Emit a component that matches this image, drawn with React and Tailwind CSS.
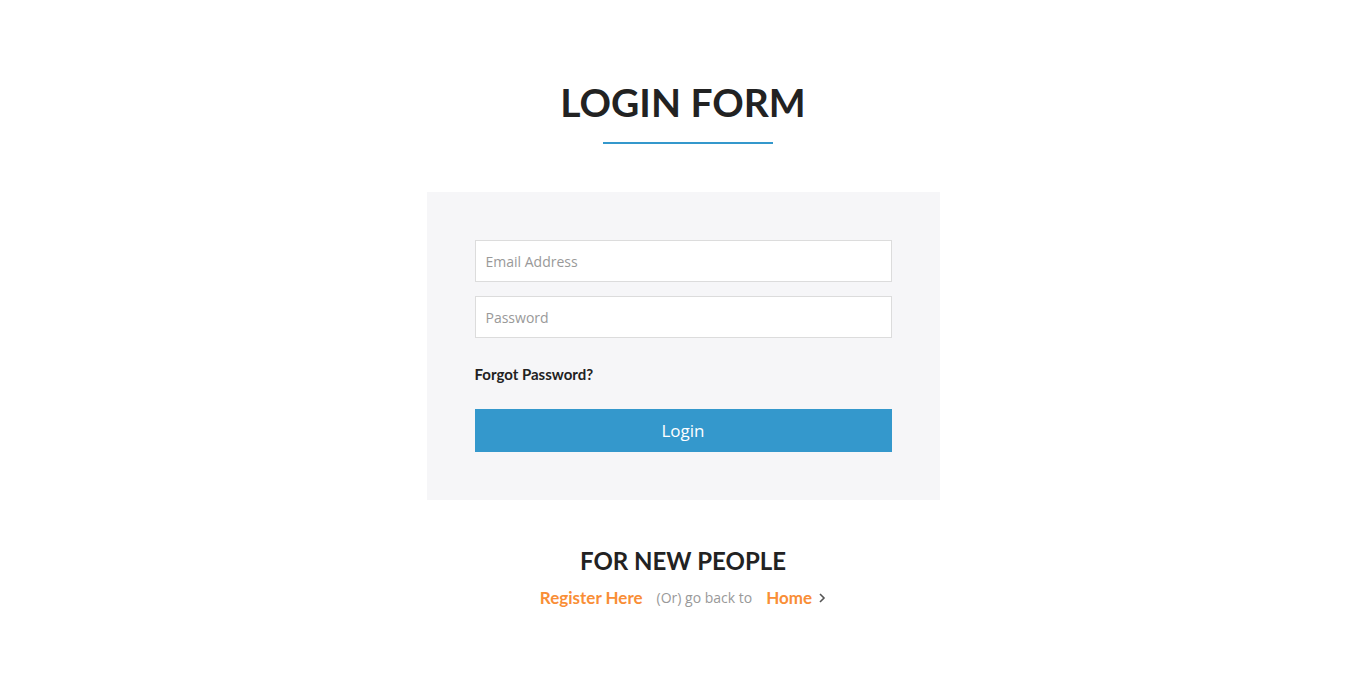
import React from 'react';

export default function App() {
    return (
        <div className="min-h-[691px] w-full bg-white flex flex-col items-center pt-[78px]">
            {/* title */}
            <h1 className="text-[39px] leading-[48px] font-bold text-[#222] font-['Lato','Liberation_Sans',sans-serif]">
                LOGIN FORM
            </h1>
            <div className="mt-[16px] ml-[10px] w-[170px] h-[2px] bg-[#3498cc]" />

            {/* form card */}
            <div className="mt-[48px] w-[513px] bg-[#f6f6f8] px-[48px] pt-[48px] pb-[48px]">
                <input
                    type="email"
                    placeholder="Email Address"
                    className="block w-full h-[42px] bg-white border border-[#dcdcdc] px-[10px] text-[14px] text-[#555] placeholder:text-[#999] outline-none font-['Open_Sans',sans-serif]"
                />
                <input
                    type="password"
                    placeholder="Password"
                    className="block w-full h-[42px] mt-[14px] bg-white border border-[#dcdcdc] px-[10px] text-[14px] text-[#555] placeholder:text-[#999] outline-none font-['Open_Sans',sans-serif]"
                />
                <div className="mt-[26px] h-[20px] flex items-center">
                    <a href="#" className="text-[15px] font-bold text-[#222] font-['Lato','Liberation_Sans',sans-serif]">
                        Forgot Password?
                    </a>
                </div>
                <button className="mt-[25px] w-full h-[43px] bg-[#3498cc] text-white text-[17px] font-['Open_Sans',sans-serif]">
                    Login
                </button>
            </div>

            {/* footer */}
            <h2 className="mt-[46px] text-[24px] leading-[30px] font-bold text-[#222] font-['Lato','Liberation_Sans',sans-serif]">
                FOR NEW PEOPLE
            </h2>
            <div className="mt-[9px] flex items-center gap-[14px]">
                <a href="#" className="text-[17px] font-bold text-[#f98e36] font-['Lato','Liberation_Sans',sans-serif]">
                    Register Here
                </a>
                <span className="text-[14px] text-[#999] font-['Open_Sans',sans-serif]">(Or) go back to</span>
                <a href="#" className="flex items-center gap-[6px] text-[17px] font-bold text-[#f98e36] font-['Lato','Liberation_Sans',sans-serif]">
                    Home
                    <svg width="8" height="12" viewBox="0 0 8 12" fill="none" stroke="#555" strokeWidth="1.6">
                        <path d="M2 2l4 4-4 4" />
                    </svg>
                </a>
            </div>
        </div>
    );
}
